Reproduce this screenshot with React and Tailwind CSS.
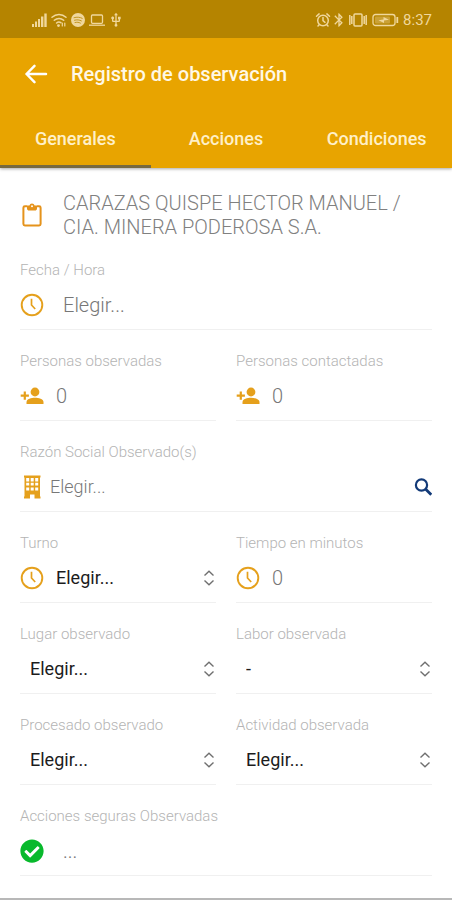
import React from "react";
import { FaCheckCircle } from "react-icons/fa";
import { MdBluetooth, MdUsb } from "react-icons/md";

function StatusBar() {
  return (
    <div className="flex h-[38px] items-center justify-between bg-[#b58400] pl-8 pr-5 pt-px text-[#f0d79c]">
      <div className="flex items-center">
        <svg className="h-4 w-4" viewBox="0 0 16 16" fill="currentColor" aria-hidden="true">
          <rect x="0" y="12" width="2" height="3" />
          <rect x="3" y="9.5" width="2" height="5.5" />
          <rect x="6" y="7" width="2" height="8" />
          <rect x="9" y="4.5" width="2.4" height="10.5" />
          <rect x="12.3" y="1.5" width="2.4" height="13.5" />
        </svg>
        <svg className="ml-[3px] h-4 w-4" viewBox="0 0 16 16" fill="none" stroke="currentColor" strokeWidth="1.5" strokeLinecap="round" aria-hidden="true">
          <path d="M1 5.2C5 1.6 11 1.600 15 5.200M3.300 8.200C6 5.800 10 5.800 12.700 8.200M5.600 11c1.400-1.200 3-1.200 4.300-.3" />
          <circle cx="7.500" cy="13.600" r=".7" fill="currentColor" />
          <path d="M11.300 11v3M13.800 11v3" strokeWidth="1.200" />
        </svg>
        <svg className="ml-[3px] h-4 w-4" viewBox="0 0 16 16" aria-hidden="true">
          <circle cx="8" cy="8" r="7" fill="currentColor" />
          <path d="M4 5.700c3-.9 5.800-.6 8.200.6M4.500 8.200c2.500-.7 4.900-.4 6.900.7M5 10.500c2-.5 3.800-.3 5.400.6" fill="none" stroke="#b58400" strokeWidth=".8" strokeLinecap="round" />
        </svg>
        <svg className="ml-[3px] h-4 w-4" viewBox="0 0 16 16" fill="none" stroke="currentColor" strokeWidth="1.300" aria-hidden="true">
          <rect x="2.500" y="3" width="11" height="8.300" rx="1" />
          <path d="M0 13.200h16" />
        </svg>
        <MdUsb className="ml-[3px] h-4 w-4" aria-hidden="true" />
      </div>
      <div className="flex items-center">
        <svg className="h-4 w-4" viewBox="0 0 16 16" fill="none" stroke="currentColor" strokeWidth="1.500" strokeLinecap="round" aria-hidden="true">
          <circle cx="8" cy="8.500" r="5.300" />
          <path d="M8 5.500v3.200l2 1.600M1.500 4.200l2.600-2.300M14.500 4.200l-2.600-2.300M4.200 12.700l-1.200 1.300M11.800 12.700l1.200 1.300" />
        </svg>
        <MdBluetooth className="h-4 w-4" aria-hidden="true" />
        <svg className="ml-0.5 h-4 w-[18px]" viewBox="0 0 18 16" fill="none" stroke="currentColor" strokeWidth="1.500" aria-hidden="true">
          <rect x="5" y="2" width="8" height="12" rx="1" />
          <path d="M2.800 4v8M15.200 4v8M.8 3v10M17.200 3v10" />
        </svg>
        <svg className="ml-[5px] h-4 w-[27px]" viewBox="0 0 27 16" fill="none" stroke="currentColor" strokeWidth="1.300" aria-hidden="true">
          <rect x="1" y="2.500" width="22" height="11" rx="2.500" />
          <rect x="3" y="4.500" width="15" height="7" rx="1" fill="currentColor" stroke="none" opacity=".35" />
          <path d="M6.500 8.200l5-.7V5l5.500 2.800-5 .7V11z" fill="currentColor" stroke="none" />
          <path d="M25.300 5v6" strokeWidth="1.800" />
        </svg>
        <span className="ml-1 text-[15px] leading-4">8:37</span>
      </div>
    </div>
  );
}

function ClockIcon() {
  return (
    <svg className="h-6 w-6 shrink-0" viewBox="0 0 24 24" fill="none" stroke="#e5a01c" aria-hidden="true">
      <circle cx="12" cy="12" r="10.300" strokeWidth="1.900" />
      <path d="M11.500 5.800v6.200l3.700 4" strokeWidth="1.700" />
    </svg>
  );
}

function ClipboardIcon() {
  return (
    <svg className="h-6 w-6 shrink-0" viewBox="0 0 24 24" fill="none" aria-hidden="true">
      <path d="M7 3.300H4.900c-.9 0-1.500.5-1.500 1.400v16.300c0 .9.6 1.400 1.500 1.400h14.200c.9 0 1.500-.5 1.500-1.400V4.700c0-.9-.6-1.400-1.500-1.400H17" stroke="#e5931c" strokeWidth="2" />
      <path d="M7 2.400h2.400a2.700 2.700 0 0 1 5.200 0H17v3.800l-1.200 1.200H8.200L7 6.200z" fill="#e5931c" />
      <circle cx="12" cy="3.200" r="1" fill="#fff" />
    </svg>
  );
}

function BuildingIcon() {
  return (
    <svg className="h-6 w-6 shrink-0" viewBox="0 0 24 24" aria-hidden="true">
      <path d="M4 .5h16.500v2H20v19h.5v2h-6V19.500h-4.500v4H4v-2h.5v-19H4z" fill="#e5a01c" />
      <path d="M6.200 3h3v3.500h-3zM10.700 3h3v3.500h-3zM15.200 3h3v3.500h-3zM6.200 7.800h3v2.700h-3zM10.700 7.800h3v2.700h-3zM15.200 7.800h3v2.700h-3zM6.200 12.500h3v3h-3zM10.700 12.500h3v3h-3zM15.200 12.500h3v3h-3z" fill="#fff" />
    </svg>
  );
}

function PersonIcon() {
  return (
    <svg className="h-6 w-6 shrink-0 text-[#e5a01c]" viewBox="0 0 24 24" fill="currentColor" aria-hidden="true">
      <circle cx="15" cy="8" r="4.400" />
      <path d="M6.500 20v-2c0-3 5-4.300 8.500-4.300s8.500 1.300 8.500 4.300v2z" />
      <path d="M3.700 7.500h2.200v3h3v2.200h-3v3H3.700v-3h-3v-2.200h3z" />
    </svg>
  );
}

function Field({ id, label, icon, wide, children }) {
  return (
    <div className={wide ? "col-span-2 border-b border-[#f0f0f0] pt-[21px]" : "border-b border-[#f0f0f0] pt-[21px]"}>
      <label htmlFor={id} className="block text-[15px] font-light leading-5 text-[#b4b4b4]">
        {label}
      </label>
      <div className="flex h-[49px] items-center">
        {icon}
        {children}
      </div>
    </div>
  );
}

function SelectBox({ id, options, className }) {
  return (
    <div className="relative flex min-w-0 flex-1 items-center">
      <select id={id} className={`h-9 w-full appearance-none bg-transparent pr-6 text-[18px] text-[#1c1c1c] outline-none ${className}`}>
        {options.map((option) => (
          <option key={option}>{option}</option>
        ))}
      </select>
      <svg className="pointer-events-none absolute right-0 h-4 w-4" viewBox="0 0 16 16" fill="none" stroke="#707070" strokeWidth="1.400" aria-hidden="true">
        <path d="M4.500 5.500L9 1.200l4.500 4.300M4.500 10.500L9 14.800l4.500-4.300" />
      </svg>
    </div>
  );
}

const inputBase = "h-9 w-full min-w-0 flex-1 bg-transparent font-light text-[#777] outline-none placeholder:text-[#777] ";

export default function App() {
  return (
    <div className="flex min-h-screen flex-col border-b-2 border-[#b8b8b8] bg-white font-[Roboto,sans-serif]">
      <header className="bg-[#e8a400] shadow-[0_1px_3px_rgba(0,0,0,0.35)]">
        <StatusBar />
        <div className="flex h-[72px] items-center pl-6">
          <button type="button" aria-label="Volver" className="h-6 w-6">
            <svg className="h-6 w-6" viewBox="0 0 24 24" fill="none" stroke="#fff" strokeWidth="2.500" strokeLinecap="round" strokeLinejoin="round" aria-hidden="true">
              <path d="M22 12H2.500M10.500 3.800L2.500 12l8 8.200" />
            </svg>
          </button>
          <h1 className="ml-[23px] text-[20px] font-medium leading-6 text-[#fff8e6]">Registro de observación</h1>
        </div>
        <nav className="grid h-[58px] grid-cols-3 text-[18px] font-medium text-[#fff0c8]">
          <button type="button" className="border-b-[3px] border-[#77693f] pt-0.5">Generales</button>
          <button type="button" className="border-b-[3px] border-transparent pt-0.5">Acciones</button>
          <button type="button" className="border-b-[3px] border-transparent pt-0.5">Condiciones</button>
        </nav>
      </header>

      <main className="flex-1 px-5 pt-[23px]">
        <div className="flex items-center">
          <ClipboardIcon />
          <p className="ml-[19px] flex-1 text-[20px] font-light leading-6 text-[#808080]">
            CARAZAS QUISPE HECTOR MANUEL / CIA. MINERA PODEROSA S.A.
          </p>
        </div>

        <form className="grid grid-cols-2 gap-x-5">
          <Field id="fecha" label="Fecha / Hora" icon={<ClockIcon />} wide>
            <input id="fecha" type="text" placeholder="Elegir..." className={inputBase + "ml-[19px] text-[20px]"} />
          </Field>
          <Field id="observadas" label="Personas observadas" icon={<PersonIcon />}>
            <input id="observadas" type="text" placeholder="0" className={inputBase + "ml-3 text-[20px]"} />
          </Field>
          <Field id="contactadas" label="Personas contactadas" icon={<PersonIcon />}>
            <input id="contactadas" type="text" placeholder="0" className={inputBase + "ml-3 text-[20px]"} />
          </Field>
          <Field id="razon" label="Razón Social Observado(s)" icon={<BuildingIcon />} wide>
            <input id="razon" type="text" placeholder="Elegir..." className={inputBase + "ml-1.5 text-[18px]"} />
            <button type="button" aria-label="Buscar" className="h-[18px] w-[18px]">
              <svg className="h-[18px] w-[18px]" viewBox="0 0 18 18" fill="none" stroke="#123a78" aria-hidden="true">
                <circle cx="7.500" cy="7" r="5.600" strokeWidth="2.200" />
                <path d="M11.500 11l5.800 5.800" strokeWidth="2.900" />
              </svg>
            </button>
          </Field>
          <Field id="turno" label="Turno" icon={<ClockIcon />}>
            <SelectBox id="turno" options={["Elegir..."]} className="pl-3" />
          </Field>
          <Field id="tiempo" label="Tiempo en minutos" icon={<ClockIcon />}>
            <input id="tiempo" type="text" placeholder="0" className={inputBase + "ml-3 text-[20px]"} />
          </Field>
          <Field id="lugar" label="Lugar observado">
            <SelectBox id="lugar" options={["Elegir..."]} className="pl-2.5" />
          </Field>
          <Field id="labor" label="Labor observada">
            <SelectBox id="labor" options={["-"]} className="pl-2.5" />
          </Field>
          <Field id="procesado" label="Procesado observado">
            <SelectBox id="procesado" options={["Elegir..."]} className="pl-2.5" />
          </Field>
          <Field id="actividad" label="Actividad observada">
            <SelectBox id="actividad" options={["Elegir..."]} className="pl-2.5" />
          </Field>
          <Field
            id="seguras"
            label="Acciones seguras Observadas"
            icon={<FaCheckCircle className="h-6 w-6 shrink-0 text-[#08b92c]" aria-hidden="true" />}
            wide
          >
            <input id="seguras" type="text" placeholder="..." className={inputBase + "ml-[19px] text-[20px]"} />
          </Field>
        </form>
      </main>
    </div>
  );
}
